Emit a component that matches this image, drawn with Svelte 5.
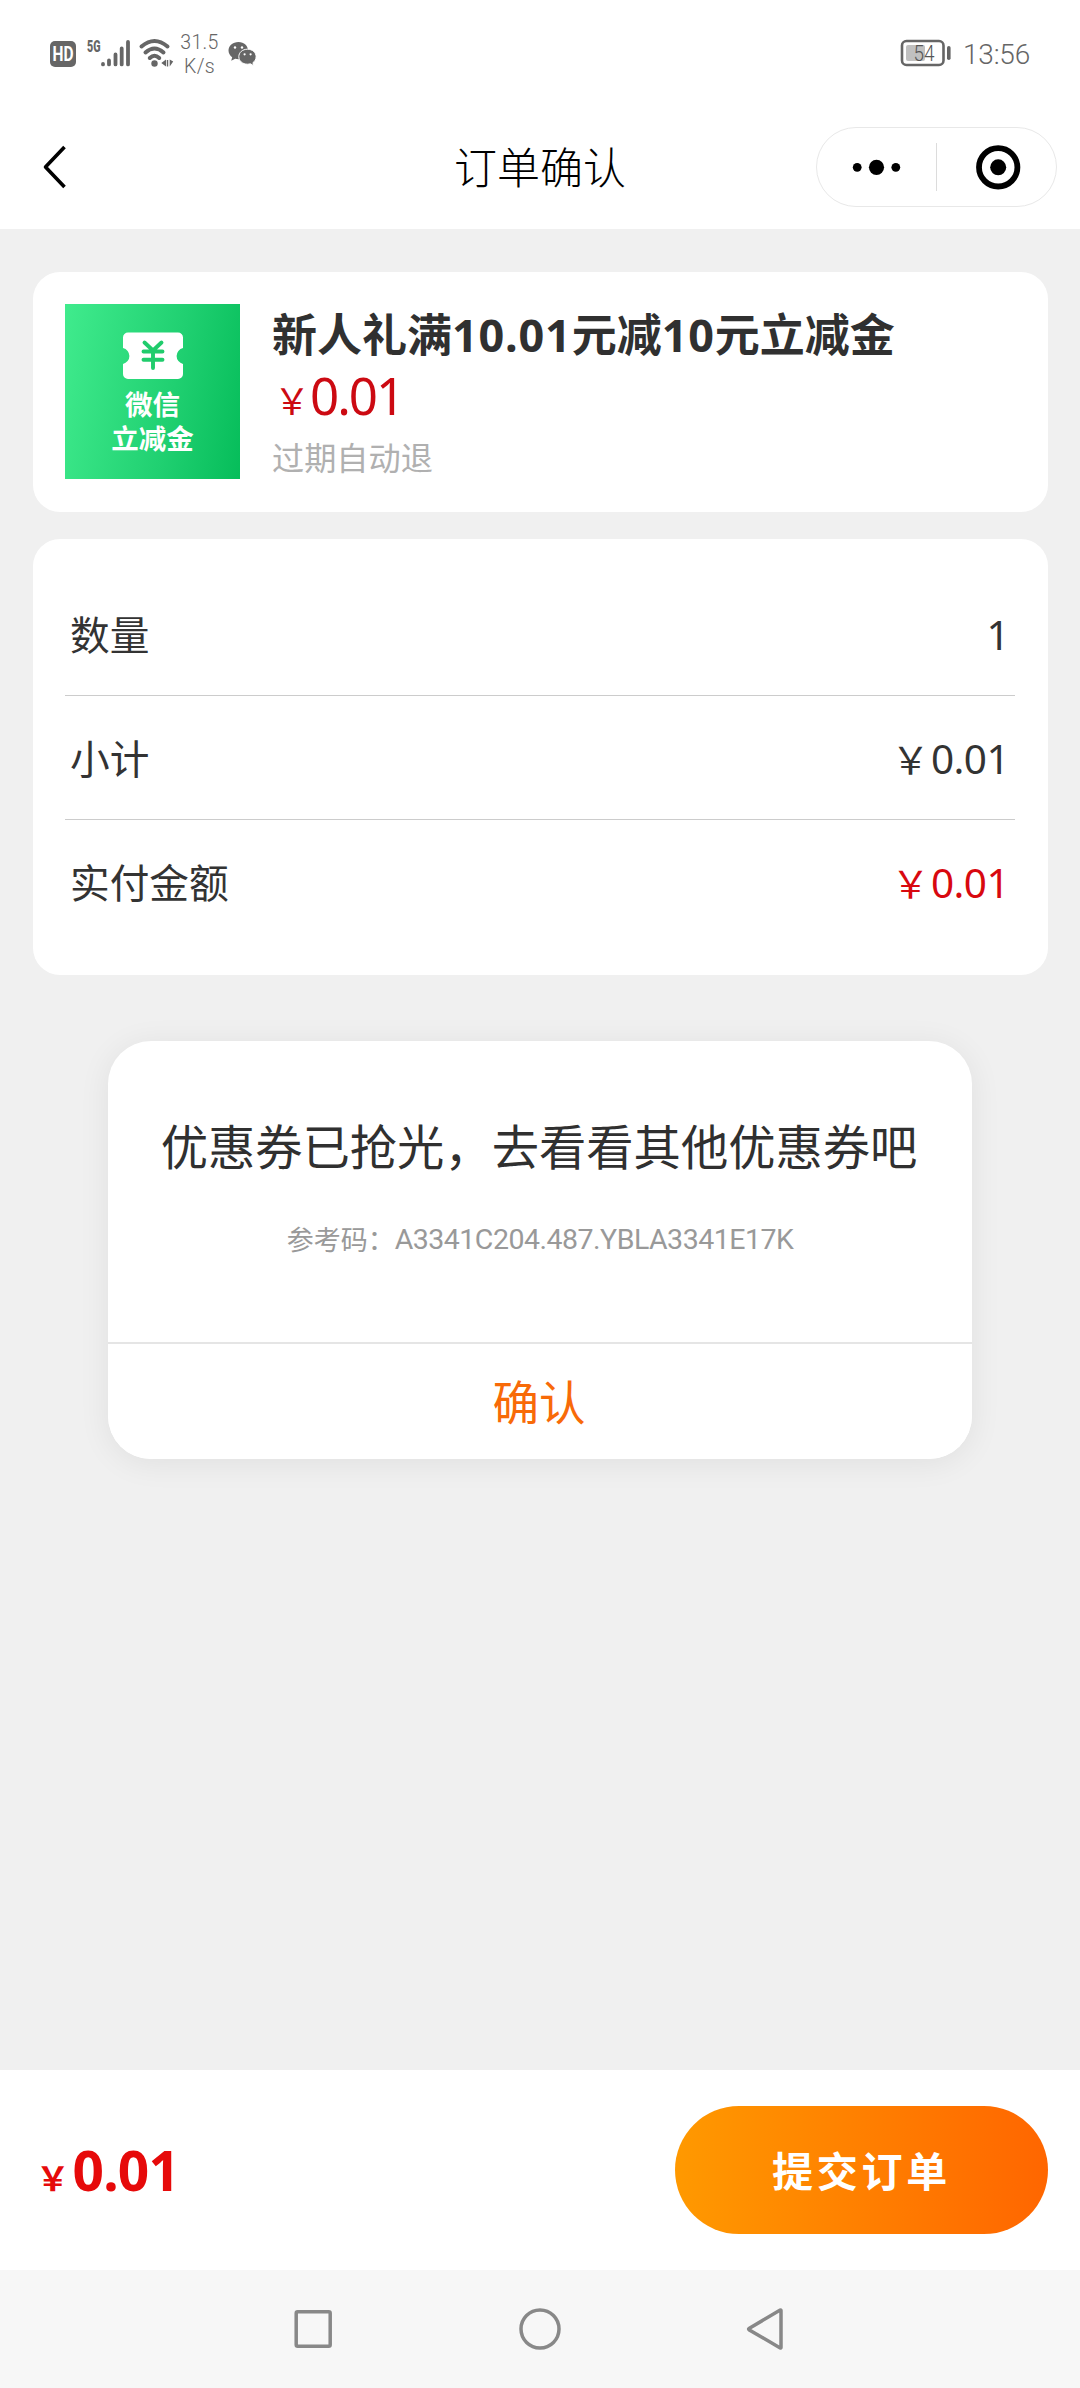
<script>
  const rows = [
    { label: '数量', yen: false, value: '1', due: false },
    { label: '小计', yen: true, value: '0.01', due: false },
    { label: '实付金额', yen: true, value: '0.01', due: true }
  ];
</script>

<div class="screen">
  <div class="status">
    <div class="status-left">
      <svg class="signals" width="134" height="42" viewBox="0 -10 134 42">
        <rect x="1" y="3" width="26" height="26" rx="5" fill="#666" />
        <text x="14" y="22.500" class="hd" text-anchor="middle" textLength="21" lengthAdjust="spacingAndGlyphs">HD</text>
        <text x="38" y="13.500" class="fiveg" textLength="13.500" lengthAdjust="spacingAndGlyphs">5G</text>
        <g stroke="#666" stroke-width="3.800" stroke-linecap="round">
          <path d="M54 26v.4M60 22.400v4M66.500 16.500v9.900M72.700 10.500v15.900M79 4v22.400" />
        </g>
        <g fill="none" stroke="#666" stroke-width="4" stroke-linecap="round">
          <path d="M92.500 8.500Q105.500 -2.500 118.500 8.500M96.500 14.500Q105.500 6.500 114.500 14.500M100.800 20Q105.500 15.500 110.200 20" />
        </g>
        <circle cx="105.500" cy="25.500" r="3.200" fill="#666" />
        <path d="M117 21.500v7l-4.700-3.500zM119.200 22v6.500h-1.400v-6.500zM120.700 21.500l3.500 2-3.500 5z" fill="#666" />
      </svg>
      <div class="speed"><span>31.5</span><span>K/s</span></div>
      <svg class="wechat" width="30" height="26" viewBox="0 0 30 26">
        <path d="M10.500 1C4.700 1 .5 4.900.5 9.600c0 2.800 1.500 5.200 3.700 6.700l-1 3.500 4-2c1 .3 2.200.4 3.300.4C16.500 18.200 20 14.300 20 9.600S16.200 1 10.500 1z" fill="#666" />
        <path d="M19.500 8.200c-5 0-8.700 3.300-8.700 7.500s3.700 7.500 8.700 7.500c1 0 2-.2 2.900-.4l3.400 1.900-.9-3c2-1.400 3.200-3.500 3.200-6 0-4.200-3.700-7.500-8.600-7.500z" fill="#666" stroke="#fff" stroke-width="1" />
        <g fill="#fff"><circle cx="7" cy="6.500" r="1.200" /><circle cx="14" cy="6.500" r="1.200" /><circle cx="16.600" cy="13.300" r="1.100" /><circle cx="22.600" cy="13.300" r="1.100" /></g>
      </svg>
    </div>
    <div class="status-right">
      <svg width="52" height="28" viewBox="0 0 52 28">
        <rect x="2" y="2" width="41.500" height="24" rx="4.500" fill="none" stroke="#666" stroke-width="2.600" />
        <rect x="6" y="6" width="19" height="16" rx="2" fill="#c0c0c0" />
        <text x="13.500" y="22.300" class="level" textLength="21" lengthAdjust="spacingAndGlyphs">54</text>
        <rect x="47" y="7" width="3.600" height="14" rx="1.800" fill="#666" />
      </svg>
      <span class="clock">13:56</span>
    </div>
  </div>

  <header class="bar">
    <svg class="back" width="28" height="48" viewBox="0 0 28 48">
      <path d="M24.500 4L5.500 24L24.500 44" fill="none" stroke="#000" stroke-width="3.600" stroke-linejoin="round" />
    </svg>
    <h1>订单确认</h1>
    <div class="capsule">
      <svg width="241" height="80" viewBox="0 0 241 80">
        <rect x=".5" y=".5" width="240" height="79" rx="39.500" fill="#fff" stroke="#e8e8e8" />
        <circle cx="41.200" cy="40.300" r="4.400" /><circle cx="60.500" cy="40.300" r="7.600" /><circle cx="79.800" cy="40.300" r="4.400" />
        <path d="M120.500 16v48" stroke="#dcdcdc" />
        <circle cx="182.200" cy="40.300" r="19.200" fill="none" stroke="#000" stroke-width="5.800" />
        <circle cx="182.200" cy="40.300" r="8" />
      </svg>
    </div>
  </header>

  <main>
    <section class="card product">
      <div class="thumb">
        <svg width="62" height="48" viewBox="0 0 62 48">
          <path d="M6 .5h50a5 5 0 0 1 5 5v10.500a8.200 8.200 0 0 0 0 16v10a5 5 0 0 1-5 5H6a5 5 0 0 1-5-5V32a8.200 8.200 0 0 0 0-16V5.500a5 5 0 0 1 5-5z" fill="#fff" />
          <path d="M22.500 10.500l8.500 8 8.500-8M31 18.500V36M21.500 19.500h19M21.500 27.700h19" fill="none" stroke="#20cc6c" stroke-width="3.900" stroke-linecap="round" />
        </svg>
        <span class="tag">微信<br />立减金</span>
      </div>
      <div class="info">
        <h2>新人礼满<b>10.01</b>元减<b>10</b>元立减金</h2>
        <div class="price"><span class="yen">￥</span><span>0.01</span></div>
        <p>过期自动退</p>
      </div>
    </section>

    <section class="card details">
      {#each rows as row}
        <div class="row">
          <span class="label">{row.label}</span>
          <span class="value" class:due={row.due}>{#if row.yen}<span class="yen">￥</span>{/if}<span>{row.value}</span></span>
        </div>
      {/each}
    </section>

    <section class="dialog" role="dialog">
      <div class="message">
        <h3>优惠券已抢光，去看看其他优惠券吧</h3>
        <p><span>参考码：</span><span class="code">A3341C204.487.YBLA3341E17K</span></p>
      </div>
      <button class="confirm">确认</button>
    </section>
  </main>

  <footer class="pay">
    <div class="total"><span class="yen">￥</span><span>0.01</span></div>
    <button class="submit">提交订单</button>
  </footer>

  <nav>
    <svg width="44" height="44" viewBox="0 0 44 44"><rect x="5.200" y="4.700" width="34" height="34.500" rx="1.500" /></svg>
    <svg width="44" height="44" viewBox="0 0 44 44"><circle cx="22" cy="22" r="19" /></svg>
    <svg width="44" height="44" viewBox="0 0 44 44"><path d="M36 3.500v37q0 .8-.8.400L4 22.700q-.8-.7 0-1.200L35.200 3.100q.8-.4.8.4z" /></svg>
  </nav>
</div>

<style>
  :global(body) { margin: 0; background: #f0f0f0; }
  .screen {
    width: 1080px;
    height: 2388px;
    display: flex;
    flex-direction: column;
    background: #f0f0f0;
    color: #333;
    font-family: 'Noto Sans', 'Noto Sans CJK SC', sans-serif;
    overflow: hidden;
  }
  h1, h2, h3, p { margin: 0; font-weight: 400; }
  svg { display: block; }
  button { border: 0; padding: 0; font-family: inherit; }

  .status {
    height: 107px;
    box-sizing: border-box;
    padding: 0 50px 0 49px;
    background: #fff;
    display: flex;
    justify-content: space-between;
    color: #666;
  }
  .status-left, .status-right { display: flex; align-items: flex-start; }
  .signals { margin-top: 28px; }
  .hd { font: 700 20px Roboto, sans-serif; fill: #fff; }
  .fiveg { font: 900 17px Roboto, sans-serif; fill: #666; }
  .level { font: 300 22px Roboto, sans-serif; fill: #555; }
  .speed {
    width: 45px;
    margin: 31px 0 0 -6px;
    display: flex;
    flex-direction: column;
    align-items: center;
    font: 300 19.500px/23.500px Roboto, sans-serif;
    letter-spacing: .3px;
  }
  .wechat { margin: 41px 0 0 6px; }
  .status-right { gap: 11px; }
  .status-right svg { margin-top: 39px; }
  .clock { margin-top: 38px; font: 300 28px/34px Roboto, sans-serif; letter-spacing: -.2px; }

  .bar {
    height: 122px;
    box-sizing: border-box;
    background: #fff;
    display: grid;
    grid-template-columns: 241px 1fr 241px;
    align-items: center;
    padding: 0 23px 2px;
  }
  .back { margin-left: 17px; }
  h1 {
    margin-top: -4px;
    text-align: center;
    font-family: 'Noto Sans CJK SC', sans-serif;
    font-size: 43px;
    line-height: 60px;
    font-weight: 300;
    color: #000;
  }

  main { flex: 1; padding: 43px 32px 0 33px; }
  .card { background: #fff; border-radius: 27px; box-sizing: border-box; }
  .product { height: 240px; padding: 32px; display: flex; gap: 32px; }
  .thumb {
    width: 175px;
    height: 175px;
    background: linear-gradient(100deg, #40eb8d, #20d071 60%, #06bd5a);
    display: flex;
    flex-direction: column;
    align-items: center;
  }
  .thumb svg { margin: 28px 0 6px; }
  .tag { color: #fff; text-align: center; font: 700 27.500px/34px 'Noto Sans CJK SC', sans-serif; }
  .info { display: flex; flex-direction: column; }
  h2 { font-size: 45px; line-height: 62px; font-weight: 700; color: #303030; white-space: nowrap; }
  h2 b { font-weight: 700; letter-spacing: .8px; }
  .price { display: flex; align-items: baseline; height: 60px; line-height: 58px; font-size: 51px; letter-spacing: -2px; color: #cc0a12; padding-left: 2px; }
  .price .yen { font-size: 36px; letter-spacing: 0; font-family: 'Noto Sans CJK SC', sans-serif; }
  .info p { font-size: 32.200px; line-height: 44px; margin-top: 10px; color: #b0b0b0; }

  .details { height: 436px; margin-top: 27px; padding: 33px 33px 0 32px; }
  .row {
    height: 124px;
    box-sizing: border-box;
    border-bottom: 1px solid #ccc;
    display: flex;
    justify-content: space-between;
    align-items: center;
    padding: 0 6px 1px 5px;
    font-size: 39.700px;
  }
  .row:last-child { border-color: transparent; }
  .value { display: flex; align-items: baseline; letter-spacing: -.6px; font-size: 40.500px; padding-top: 2px; }
  .value .yen { letter-spacing: 1.500px; font-size: 38px; }
  .due { color: #d8080f; }

  .dialog {
    width: 864px;
    height: 418px;
    margin: 66px 0 0 75px;
    border-radius: 43px;
    background: #fff;
    box-shadow: 0 4px 32px rgba(0, 0, 0, .07);
    display: flex;
    flex-direction: column;
    overflow: hidden;
    text-align: center;
  }
  .message { flex: 1; border-bottom: 2px solid #e5e5e5; padding-top: 73px; }
  h3 { font-size: 47.300px; line-height: 66px; color: #303030; white-space: nowrap; margin-left: -2px; }
  .message p { display: flex; justify-content: center; margin-top: 40px; font-size: 27px; line-height: 40px; color: #999; }
  .code { font-family: Roboto, sans-serif; font-size: 28.500px; letter-spacing: -.5px; }
  .confirm { height: 115px; background: #fff; color: #f86a08; font-size: 46.500px; line-height: 66px; padding: 1px 2px 0 0; }

  .pay {
    height: 200px;
    box-sizing: border-box;
    background: #fff;
    padding: 0 32px 0 36px;
    display: flex;
    align-items: center;
    justify-content: space-between;
  }
  .total { display: flex; align-items: baseline; font-size: 55px; font-weight: 700; letter-spacing: -.8px; color: #e60a0a; margin-top: -1px; }
  .total .yen { font-size: 33.500px; letter-spacing: 3px; }
  .submit {
    width: 373px;
    height: 128px;
    border-radius: 64px;
    background: linear-gradient(90deg, #ff9900, #ff6600);
    color: #fff;
    font-size: 41px;
    font-weight: 700;
    letter-spacing: 3.700px;
    padding-bottom: 2px;
  }

  nav {
    height: 118px;
    background: #f7f7f7;
    display: flex;
    justify-content: center;
    align-items: center;
    gap: 183px;
  }
  nav svg { fill: none; stroke: #888; stroke-width: 3.500; }
</style>
